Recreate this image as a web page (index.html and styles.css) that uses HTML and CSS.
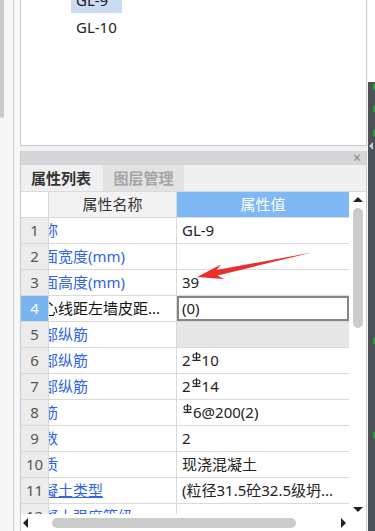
FILE: index.html
```html
<!DOCTYPE html>
<html lang="zh-CN">

<head>
  <meta charset="UTF-8">
  <meta name="viewport" content="width=device-width, initial-scale=1.0">
  <title>属性列表</title>
  <link rel="stylesheet" href="styles.css">
</head>

<body>
  <div class="screen">
    <!-- 左侧滚动条 -->
    <div class="side">
      <div class="side-thumb"></div>
      <div class="side-line"></div>
    </div>

    <div class="main">
      <!-- 构件列表 -->
      <div class="list-panel">
        <ul class="gl-list">
          <li class="selected">GL-9</li>
          <li>GL-10</li>
        </ul>
      </div>

      <!-- 属性面板 -->
      <div class="prop-panel">
        <div class="panel-title"><span class="close">×</span></div>
        <div class="tabs">
          <span class="tab active">属性列表</span>
          <span class="tab">图层管理</span>
        </div>

        <div class="grid-area">
          <div class="grid">
            <div class="row head">
              <div class="num"></div>
              <div class="name">属性名称</div>
              <div class="val">属性值</div>
            </div>

            <div class="rows">
              <div class="row">
                <div class="num">1</div>
                <div class="name"><span>名称</span></div>
                <div class="val">GL-9</div>
              </div>
              <div class="row">
                <div class="num">2</div>
                <div class="name"><span>截面宽度(mm)</span></div>
                <div class="val"></div>
              </div>
              <div class="row">
                <div class="num">3</div>
                <div class="name"><span>截面高度(mm)</span></div>
                <div class="val">39</div>
              </div>
              <div class="row current">
                <div class="num">4</div>
                <div class="name"><span>中心线距左墙皮距...</span></div>
                <div class="val edit">(0)</div>
              </div>
              <div class="row">
                <div class="num">5</div>
                <div class="name"><span>全部纵筋</span></div>
                <div class="val gray"></div>
              </div>
              <div class="row">
                <div class="num">6</div>
                <div class="name"><span>上部纵筋</span></div>
                <div class="val">2<svg class="bar" viewBox="0 0 10 10"><path d="M5 0V9M0.5 9.3H9.5" /><rect x="1.2" y="2.2" width="7.6" height="4.2" rx="1.8" /></svg>10</div>
              </div>
              <div class="row">
                <div class="num">7</div>
                <div class="name"><span>下部纵筋</span></div>
                <div class="val">2<svg class="bar" viewBox="0 0 10 10"><path d="M5 0V9M0.5 9.3H9.5" /><rect x="1.2" y="2.2" width="7.6" height="4.2" rx="1.8" /></svg>14</div>
              </div>
              <div class="row">
                <div class="num">8</div>
                <div class="name"><span>箍筋</span></div>
                <div class="val"><svg class="bar" viewBox="0 0 10 10"><path d="M5 0V9M0.5 9.3H9.5" /><rect x="1.2" y="2.2" width="7.6" height="4.2" rx="1.8" /></svg>6@200(2)</div>
              </div>
              <div class="row">
                <div class="num">9</div>
                <div class="name"><span>肢数</span></div>
                <div class="val">2</div>
              </div>
              <div class="row">
                <div class="num">10</div>
                <div class="name"><span>材质</span></div>
                <div class="val">现浇混凝土</div>
              </div>
              <div class="row">
                <div class="num">11</div>
                <div class="name link"><span>混凝土类型</span></div>
                <div class="val">(粒径31.5砼32.5级坍...</div>
              </div>
              <div class="row">
                <div class="num">12</div>
                <div class="name"><span>混凝土强度等级</span></div>
                <div class="val"></div>
              </div>
            </div>

            <!-- 水平滚动条 -->
            <div class="hscroll">
              <span class="arr-left"></span>
              <span class="h-thumb"></span>
              <span class="arr-right"></span>
            </div>
          </div>

          <!-- 垂直滚动条 -->
          <div class="vscroll">
            <span class="arr-up"></span>
            <span class="v-thumb"></span>
            <span class="arr-down"></span>
          </div>
        </div>
      </div>
    </div>

    <!-- 右侧停靠栏 -->
    <div class="dock">
      <div class="dock-bar">
        <i class="mark m1"></i>
        <i class="mark m2"></i>
        <i class="mark m3"></i>
        <span class="dock-arrow"></span>
        <i class="mark m4"></i>
        <i class="mark m5"></i>
      </div>
    </div>

    <!-- 标注箭头 -->
    <svg class="arrow" width="375" height="531" viewBox="0 0 375 531">
      <polygon points="197,277 221,264.5 216.5,270 312,252.5 217.5,275.5 224,279" />
    </svg>
  </div>
</body>

</html>
```

FILE: styles.css
```css
* {
  margin: 0;
  padding: 0;
  box-sizing: border-box;
}

body {
  background-color: #f7f7f7;
  font-family: "Noto Sans", "Noto Sans CJK SC", sans-serif;
  font-size: 15px;
  color: #222;
}

.screen {
  position: relative;
  display: flex;
  width: 375px;
  height: 531px;
  overflow: hidden;
}

/* 左侧滚动条 */
.side {
  display: flex;
  width: 20px;
  flex-shrink: 0;
}

.side-thumb {
  width: 4px;
  height: 118px;
  background-color: #cacaca;
  border-radius: 0 0 2px 2px;
}

.side-line {
  width: 1px;
  margin-left: 9px;
  background-color: #d2d2d2;
}

.main {
  display: flex;
  flex-direction: column;
  width: 347px;
  flex-shrink: 0;
  background-color: #f0f0f0;
}

/* 构件列表 */
.list-panel {
  height: 146px;
  background-color: #fff;
  border: 1px solid #c9c9c9;
  border-top: 0;
  overflow: hidden;
}

.gl-list {
  list-style: none;
  margin: -13px 0 0 50px;
}

.gl-list li {
  width: 51px;
  height: 26px;
  line-height: 26px;
  padding-left: 5px;
  margin-bottom: 1px;
}

.gl-list .selected {
  background-color: #cadcf1;
}

/* 属性面板 */
.prop-panel {
  display: flex;
  flex-direction: column;
  flex: 1;
  min-height: 0;
  margin-top: 5px;
  background-color: #fff;
  border-left: 1px solid #c9c9c9;
  border-right: 1px solid #c9c9c9;
}

.panel-title {
  display: flex;
  justify-content: flex-end;
  align-items: center;
  height: 14px;
  padding-right: 5px;
  background-color: #d4d6d9;
}

.close {
  font-size: 14px;
  line-height: 14px;
  color: #8a8a8a;
}

.tabs {
  display: flex;
  height: 27px;
  background-color: #f0f0f0;
  border-bottom: 1px solid #dadada;
}

.tab {
  width: 81px;
  line-height: 26px;
  text-align: center;
  font-weight: bold;
  color: #a5a5a5;
  background-color: #e2e2e2;
}

.tab + .tab {
  margin-left: 2px;
}

.tab.active {
  width: 80px;
  color: #333;
  background-color: #f0f0f0;
}

.grid-area {
  display: flex;
  flex: 1;
  min-height: 0;
}

.grid {
  display: flex;
  flex-direction: column;
  width: 328px;
}

.row {
  display: grid;
  grid-template-columns: 28px 128px 172px;
  height: 26px;
  line-height: 25px;
  border-bottom: 1px solid #d9d9d9;
}

.num {
  text-align: center;
  color: #555;
  background-color: #ececec;
  border-right: 1px solid #d9d9d9;
}

.name {
  overflow: hidden;
  white-space: nowrap;
  color: #2f63e8;
  border-right: 1px solid #d9d9d9;
}

/* 属性名称列已向右滚动，左侧文字被遮住 */
.name span {
  display: block;
  margin-left: -21px;
}

.name.link span {
  text-decoration: underline;
}

.val {
  padding-left: 5px;
  white-space: nowrap;
  overflow: hidden;
}

/* 表头 */
.row.head .num {
  background-color: #fff;
}

.row.head .name {
  text-align: center;
  color: #333;
  background-color: #f2f2f2;
}

.row.head .val {
  padding-left: 0;
  text-align: center;
  color: #fff;
  background-color: #7eb8f5;
}

.rows {
  height: 296px;
  overflow: hidden;
}

.row.current .num {
  color: #fff;
  background-color: #78b4f0;
}

.row.current .name {
  color: #111;
}

.val.edit {
  box-shadow: inset 0 0 0 2px #858585;
}

.val.gray {
  background-color: #e6e6e6;
}

.bar {
  width: 9px;
  height: 9px;
  margin: 0 1px;
  vertical-align: 5px;
  fill: none;
  stroke: #222;
  stroke-width: 1.3;
}

/* 水平滚动条 */
.hscroll {
  display: flex;
  align-items: center;
  height: 17px;
  padding-left: 2px;
}

.arr-left {
  border-right: 5px solid #222;
  border-top: 5px solid transparent;
  border-bottom: 5px solid transparent;
}

.h-thumb {
  width: 244px;
  height: 10px;
  margin-left: 24px;
  background-color: #cbcbcb;
  border-radius: 5px;
}

.arr-right {
  margin-left: 45px;
  border-left: 5px solid #222;
  border-top: 5px solid transparent;
  border-bottom: 5px solid transparent;
}

/* 垂直滚动条 */
.vscroll {
  display: flex;
  flex-direction: column;
  align-items: center;
  width: 17px;
  padding-top: 5px;
}

.arr-up {
  border-bottom: 5px solid #222;
  border-left: 5px solid transparent;
  border-right: 5px solid transparent;
}

.v-thumb {
  width: 10px;
  height: 120px;
  margin-top: 6px;
  background-color: #cbcbcb;
  border-radius: 5px;
}

.arr-down {
  margin-top: 179px;
  border-top: 5px solid #222;
  border-left: 5px solid transparent;
  border-right: 5px solid transparent;
}

/* 右侧停靠栏 */
.dock {
  width: 7px;
  margin-left: 1px;
  padding-top: 82px;
  background-color: #fff;
}

.dock-bar {
  display: flex;
  flex-direction: column;
  align-items: flex-end;
  height: 100%;
  background-color: #4d5259;
}

.mark {
  width: 2px;
  height: 6px;
  background-color: #1faa2c;
}

.m1 {
  margin-top: 2px;
}

.m2 {
  margin-top: 16px;
}

.m3 {
  margin-top: 18px;
}

.dock-arrow {
  align-self: flex-start;
  margin: 6px 0 0 1px;
  border-right: 4px solid #c8cbd0;
  border-top: 4px solid transparent;
  border-bottom: 4px solid transparent;
}

.m4 {
  margin-top: 188px;
}

.m5 {
  margin-top: 88px;
}

/* 标注箭头 */
.arrow {
  position: absolute;
  left: 0;
  top: 0;
  pointer-events: none;
}

.arrow polygon {
  fill: #e8312a;
}
```
